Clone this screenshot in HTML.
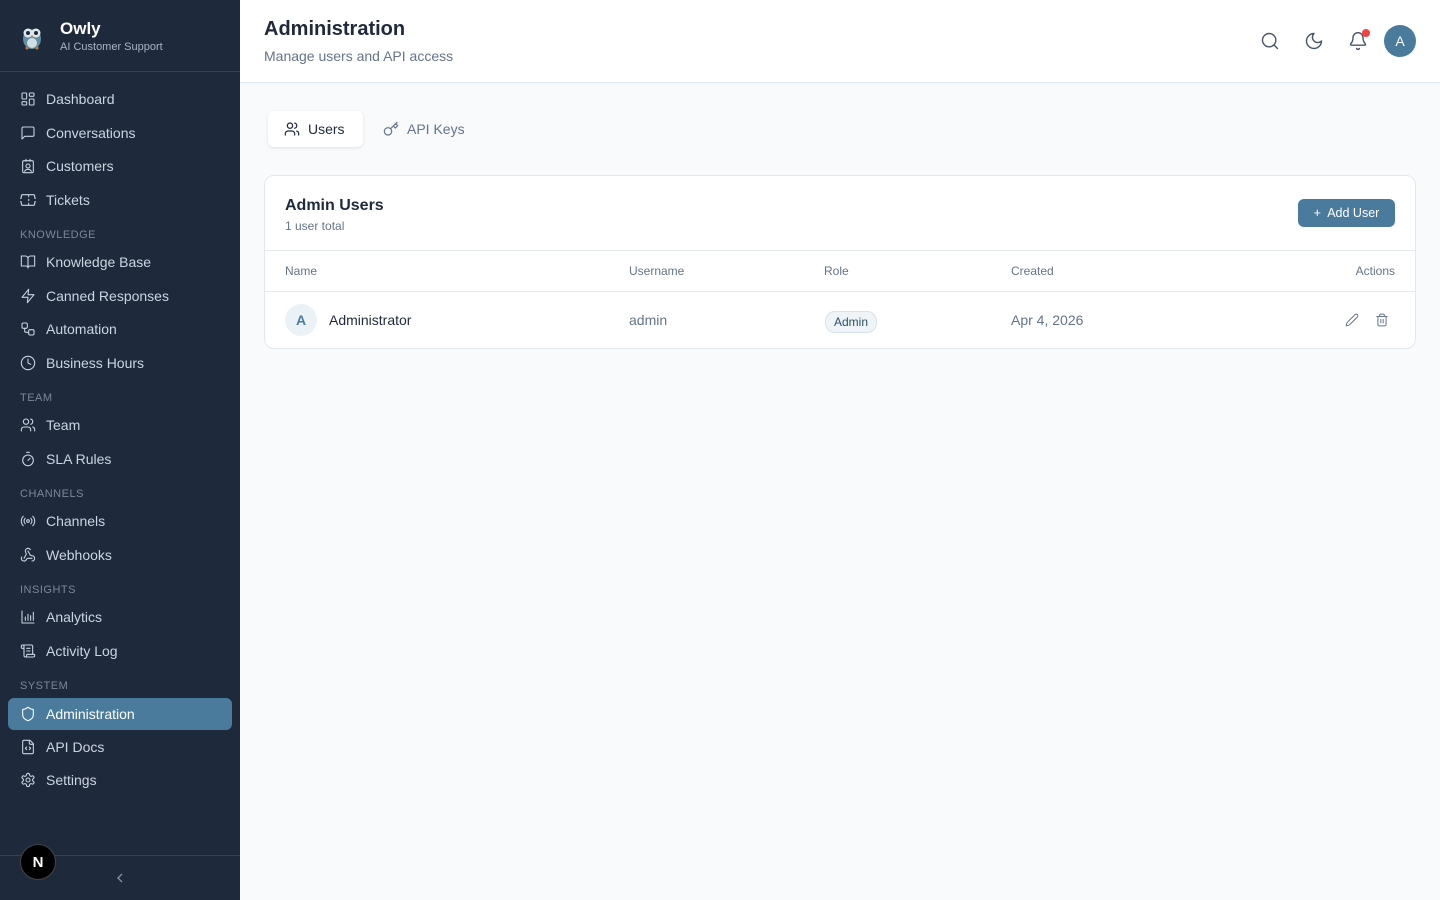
<!DOCTYPE html>
<html><head><meta charset="utf-8"><style>
*{box-sizing:border-box;margin:0;padding:0}
body{width:1440px;height:900px;font-family:"Liberation Sans",sans-serif;background:#f8fafc;position:relative;overflow:hidden}
.sb{position:absolute;left:0;top:0;width:240px;height:900px;background:#1e293b}
.it{position:absolute;left:8px;width:224px;height:32px;display:flex;align-items:center;padding-left:12px;color:#cbd5e1;font-size:14px}
.it svg{width:16px;height:16px;margin-right:10px;fill:none;stroke:#cbd5e1;stroke-width:1.6;stroke-linecap:round;stroke-linejoin:round}
.it.act{background:#4a7b9d;color:#fff;border-radius:6px}
.it.act svg{stroke:#fff}
.lb{position:absolute;left:20px;font-size:11px;color:#7d8797;letter-spacing:.5px}
.hd{position:absolute;left:240px;top:0;right:0;height:83px;background:#fff;border-bottom:1px solid #e2e8f0}
.ic{position:absolute;fill:none;stroke:#475569;stroke-width:1.7;stroke-linecap:round;stroke-linejoin:round}
.card{position:absolute;left:264px;top:175px;width:1152px;height:174px;background:#fff;border:1px solid #e2e8f0;border-radius:10px}
.th{position:absolute;top:88px;font-size:12px;color:#64748b}
</style></head><body>
<div class="sb">
 <svg style="position:absolute;left:19px;top:22px" width="26" height="28" viewBox="0 0 26 28"><ellipse cx="13" cy="17" rx="9" ry="10" fill="#5f8fa0"/><circle cx="9" cy="11" r="4.5" fill="#dfe8ea"/><circle cx="17" cy="11" r="4.5" fill="#dfe8ea"/><circle cx="9" cy="11" r="2" fill="#1e293b"/><circle cx="17" cy="11" r="2" fill="#1e293b"/><path d="M12 14l1 2 1-2z" fill="#d98a4a"/><ellipse cx="13" cy="21" rx="5" ry="5" fill="#cfdfe2"/><circle cx="8" cy="26" r="1.6" fill="#b8744a"/><circle cx="18" cy="26" r="1.6" fill="#b8744a"/></svg>
 <div style="position:absolute;left:60px;top:19px;color:#fff;font-weight:bold;font-size:17px">Owly</div>
 <div style="position:absolute;left:60px;top:41px;color:#aab4c2;font-size:11px">AI Customer Support</div>
 <div style="position:absolute;left:0;top:71px;width:240px;height:1px;background:#334155"></div>

 <div class="it" style="top:83px"><svg viewBox="0 0 24 24"><rect x="3" y="3" width="7" height="9" rx="1"/><rect x="14" y="3" width="7" height="5" rx="1"/><rect x="14" y="12" width="7" height="9" rx="1"/><rect x="3" y="16" width="7" height="5" rx="1"/></svg>Dashboard</div>
 <div class="it" style="top:117px"><svg viewBox="0 0 24 24"><path d="M21 15a2 2 0 0 1-2 2H7l-4 4V5a2 2 0 0 1 2-2h14a2 2 0 0 1 2 2z"/></svg>Conversations</div>
 <div class="it" style="top:150px"><svg viewBox="0 0 24 24"><rect x="4" y="4" width="16" height="18" rx="2"/><path d="M9 2v3M15 2v3"/><circle cx="12" cy="12" r="3"/><path d="M7 20c1-2 3-3 5-3s4 1 5 3"/></svg>Customers</div>
 <div class="it" style="top:184px"><svg viewBox="0 0 24 24"><path d="M2 9a3 3 0 0 0 0 6v3a2 2 0 0 0 2 2h16a2 2 0 0 0 2-2v-3a3 3 0 0 0 0-6V6a2 2 0 0 0-2-2H4a2 2 0 0 0-2 2z"/><path d="M13 5v2M13 17v2M13 11v2"/></svg>Tickets</div>
 <div class="lb" style="top:229px">KNOWLEDGE</div>
 <div class="it" style="top:246px"><svg viewBox="0 0 24 24"><path d="M2 3h6a4 4 0 0 1 4 4v14a3 3 0 0 0-3-3H2z"/><path d="M22 3h-6a4 4 0 0 0-4 4v14a3 3 0 0 1 3-3h7z"/></svg>Knowledge Base</div>
 <div class="it" style="top:280px"><svg viewBox="0 0 24 24"><path d="M13 2L3 14h9l-1 8 10-12h-9z"/></svg>Canned Responses</div>
 <div class="it" style="top:313px"><svg viewBox="0 0 24 24"><rect x="3" y="3" width="8" height="8" rx="2"/><path d="M7 11v4a2 2 0 0 0 2 2h4"/><rect x="13" y="13" width="8" height="8" rx="2"/></svg>Automation</div>
 <div class="it" style="top:347px"><svg viewBox="0 0 24 24"><circle cx="12" cy="12" r="10"/><path d="M12 6v6l4 2"/></svg>Business Hours</div>
 <div class="lb" style="top:392px">TEAM</div>
 <div class="it" style="top:409px"><svg viewBox="0 0 24 24"><path d="M16 21v-2a4 4 0 0 0-4-4H6a4 4 0 0 0-4 4v2"/><circle cx="9" cy="7" r="4"/><path d="M22 21v-2a4 4 0 0 0-3-3.9M16 3.1a4 4 0 0 1 0 7.8"/></svg>Team</div>
 <div class="it" style="top:443px"><svg viewBox="0 0 24 24"><circle cx="12" cy="14" r="8"/><path d="M10 2h4M12 14l3-3"/></svg>SLA Rules</div>
 <div class="lb" style="top:488px">CHANNELS</div>
 <div class="it" style="top:505px"><svg viewBox="0 0 24 24"><circle cx="12" cy="12" r="2"/><path d="M16.2 7.8a6 6 0 0 1 0 8.4M7.8 16.2a6 6 0 0 1 0-8.4M19.1 4.9a10 10 0 0 1 0 14.2M4.9 19.1a10 10 0 0 1 0-14.2"/></svg>Channels</div>
 <div class="it" style="top:539px"><svg viewBox="0 0 24 24"><path d="M18 16.98h-5.99c-1.1 0-1.950.94-2.48 1.9A4 4 0 0 1 2 17c.01-.7.2-1.4.57-2"/><path d="M6 17l3.13-5.78c.53-.97.1-2.18-.5-3.1a4 4 0 1 1 6.89-4.06"/><path d="M12 6l3.13 5.73C15.66 12.7 16.9 13 18 13a4 4 0 0 1 0 8"/></svg>Webhooks</div>
 <div class="lb" style="top:584px">INSIGHTS</div>
 <div class="it" style="top:601px"><svg viewBox="0 0 24 24"><path d="M3 3v18h18M8 17v-5M12 17V8M16 17v-7M20 17V5"/></svg>Analytics</div>
 <div class="it" style="top:635px"><svg viewBox="0 0 24 24"><path d="M15 12h-5M15 8h-5M19 17V5a2 2 0 0 0-2-2H4"/><path d="M8 21h12a2 2 0 0 0 2-2v-1a1 1 0 0 0-1-1H11a1 1 0 0 0-1 1v1a2 2 0 1 1-4 0V5a2 2 0 1 0-4 0v2a1 1 0 0 0 1 1h3"/></svg>Activity Log</div>
 <div class="lb" style="top:680px">SYSTEM</div>
 <div class="it act" style="top:698px"><svg viewBox="0 0 24 24"><path d="M20 13c0 5-3.5 7.5-7.7 9a1 1 0 0 1-.6 0C7.5 20.5 4 18 4 13V6a1 1 0 0 1 1-1c2 0 4.5-1.2 6.2-2.7a1.2 1.2 0 0 1 1.5 0C14.5 3.8 17 5 19 5a1 1 0 0 1 1 1z"/></svg>Administration</div>
 <div class="it" style="top:731px"><svg viewBox="0 0 24 24"><path d="M15 2H6a2 2 0 0 0-2 2v16a2 2 0 0 0 2 2h12a2 2 0 0 0 2-2V7z"/><path d="M14 2v4a2 2 0 0 0 2 2h4M10 12l-2 2 2 2M14 16l2-2-2-2"/></svg>API Docs</div>
 <div class="it" style="top:764px"><svg viewBox="0 0 24 24"><circle cx="12" cy="12" r="3"/><path d="M12.2 2h-.4a2 2 0 0 0-2 2v.2a2 2 0 0 1-1 1.7l-.4.3a2 2 0 0 1-2 0l-.2-.1a2 2 0 0 0-2.7.7l-.2.4a2 2 0 0 0 .7 2.7l.2.1a2 2 0 0 1 1 1.7v.5a2 2 0 0 1-1 1.7l-.2.1a2 2 0 0 0-.7 2.7l.2.4a2 2 0 0 0 2.7.7l.2-.1a2 2 0 0 1 2 0l.4.3a2 2 0 0 1 1 1.7v.2a2 2 0 0 0 2 2h.4a2 2 0 0 0 2-2v-.2a2 2 0 0 1 1-1.7l.4-.3a2 2 0 0 1 2 0l.2.1a2 2 0 0 0 2.7-.7l.2-.4a2 2 0 0 0-.7-2.7l-.2-.1a2 2 0 0 1-1-1.7v-.5a2 2 0 0 1 1-1.7l.2-.1a2 2 0 0 0 .7-2.7l-.2-.4a2 2 0 0 0-2.7-.7l-.2.1a2 2 0 0 1-2 0l-.4-.3a2 2 0 0 1-1-1.7V4a2 2 0 0 0-2-2z"/></svg>Settings</div>
 <div style="position:absolute;left:0;top:855px;width:240px;height:1px;background:#334155"></div>
 <div style="position:absolute;left:20px;top:844px;width:36px;height:36px;border-radius:50%;background:#000;border:1px solid #444;color:#fff;font-size:15px;font-weight:bold;display:flex;align-items:center;justify-content:center">N</div>
 <svg style="position:absolute;left:114px;top:872px" width="12" height="12" viewBox="0 0 12 12" fill="none" stroke="#8391a5" stroke-width="1.4"><path d="M8 2L4 6l4 4"/></svg>
</div>

<div class="hd">
 <div style="position:absolute;left:24px;top:18px;font-size:20px;font-weight:bold;color:#1e293b">Administration</div>
 <div style="position:absolute;left:24px;top:48px;font-size:14px;color:#64748b">Manage users and API access</div>
 <svg class="ic" style="left:1020px;top:31px" width="20" height="20" viewBox="0 0 24 24"><circle cx="11" cy="11" r="8"/><path d="M21 21l-4.3-4.3"/></svg>
 <svg class="ic" style="left:1064px;top:31px" width="20" height="20" viewBox="0 0 24 24"><path d="M12 3a6 6 0 0 0 9 9 9 9 0 1 1-9-9z"/></svg>
 <svg class="ic" style="left:1108px;top:31px" width="20" height="20" viewBox="0 0 24 24"><path d="M10.3 21a1.9 1.9 0 0 0 3.4 0M3.3 15.3A1 1 0 0 0 4 17h16a1 1 0 0 0 .7-1.7C19.4 14 18 12.5 18 8A6 6 0 0 0 6 8c0 4.5-1.4 6-2.7 7.3"/></svg>
 <div style="position:absolute;left:1122px;top:29px;width:8px;height:8px;border-radius:50%;background:#ef4444"></div>
 <div style="position:absolute;left:1144px;top:25px;width:32px;height:32px;border-radius:50%;background:#4a7b9d;color:#fff;font-size:14px;display:flex;align-items:center;justify-content:center">A</div>
</div>

<div style="position:absolute;left:268px;top:111px;width:95px;height:36px;background:#fff;border-radius:6px;box-shadow:0 1px 3px rgba(0,0,0,.1);display:flex;align-items:center;padding-left:16px;font-size:14px;color:#1e293b"><svg width="16" height="16" viewBox="0 0 24 24" fill="none" stroke="#1e293b" stroke-width="1.8" stroke-linecap="round" style="margin-right:8px"><path d="M16 21v-2a4 4 0 0 0-4-4H6a4 4 0 0 0-4 4v2"/><circle cx="9" cy="7" r="4"/><path d="M22 21v-2a4 4 0 0 0-3-3.9M16 3.1a4 4 0 0 1 0 7.8"/></svg>Users</div>
<div style="position:absolute;left:383px;top:111px;height:36px;display:flex;align-items:center;font-size:14px;color:#64748b"><svg width="16" height="16" viewBox="0 0 24 24" fill="none" stroke="#64748b" stroke-width="1.8" stroke-linecap="round" style="margin-right:8px"><circle cx="7.5" cy="15.5" r="5.5"/><path d="M21 2l-9.6 9.6M15.5 7.5l3 3L22 7l-3-3"/></svg>API Keys</div>

<div class="card">
 <div style="position:absolute;left:20px;top:21px;font-size:16px;font-weight:bold;color:#1e293b">Admin Users</div>
 <div style="position:absolute;left:20px;top:43px;font-size:12px;color:#64748b">1 user total</div>
 <div style="position:absolute;left:1033px;top:23px;width:97px;height:28px;background:#4a7b9d;border-radius:6px;color:#fff;font-size:12.5px;display:flex;align-items:center;justify-content:center">+&nbsp; Add User</div>
 <div style="position:absolute;left:0;top:74px;width:100%;height:1px;background:#e2e8f0"></div>
 <div class="th" style="left:20px">Name</div>
 <div class="th" style="left:364px">Username</div>
 <div class="th" style="left:559px">Role</div>
 <div class="th" style="left:746px">Created</div>
 <div class="th" style="right:20px">Actions</div>
 <div style="position:absolute;left:0;top:115px;width:100%;height:1px;background:#e2e8f0"></div>
 <div style="position:absolute;left:20px;top:128px;width:32px;height:32px;border-radius:50%;background:#eaf2f7;color:#4a7b9d;font-weight:bold;font-size:14px;display:flex;align-items:center;justify-content:center">A</div>
 <div style="position:absolute;left:64px;top:136px;font-size:14px;color:#1e293b">Administrator</div>
 <div style="position:absolute;left:364px;top:136px;font-size:14px;color:#64748b">admin</div>
 <div style="position:absolute;left:560px;top:135px;padding:3px 8px;border:1px solid #d6e4ee;background:#eef4f8;border-radius:10px;font-size:12px;color:#2f4f66">Admin</div>
 <div style="position:absolute;left:746px;top:136px;font-size:14px;color:#64748b">Apr 4, 2026</div>
 <svg class="ic" style="left:1080px;top:137px;stroke:#64748b" width="14" height="14" viewBox="0 0 24 24"><path d="M21.2 6.8a2.8 2.8 0 0 0-4-4L3.8 16.2a2 2 0 0 0-.5.8l-1.3 4.4a.5.5 0 0 0 .6.6l4.4-1.3a2 2 0 0 0 .8-.5z"/></svg>
 <svg class="ic" style="left:1110px;top:137px;stroke:#64748b" width="14" height="14" viewBox="0 0 24 24"><path d="M3 6h18M19 6v14a2 2 0 0 1-2 2H7a2 2 0 0 1-2-2V6M8 6V4a2 2 0 0 1 2-2h4a2 2 0 0 1 2 2v2M10 11v6M14 11v6"/></svg>
</div>
</body></html>
